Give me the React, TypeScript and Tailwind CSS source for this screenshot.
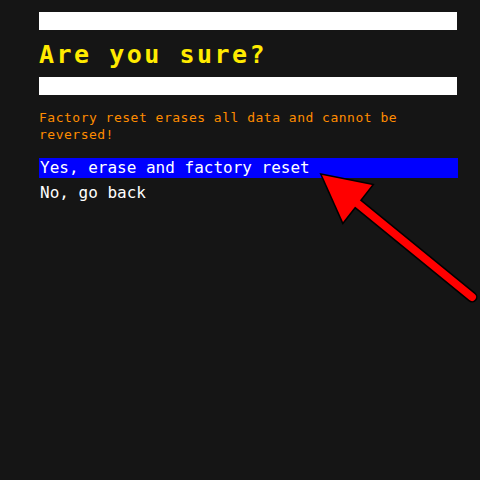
export default function App() {
  return (
    <main className="relative min-h-[480px] w-[480px] overflow-hidden bg-[#151515] font-['DejaVu_Sans_Mono',monospace]">
      <div className="ml-[39px] w-[419px] pt-[12px]">
        <div className="h-[18px] w-[418px] bg-white" />

        <h1 className="mt-[7px] text-[25px] leading-[36px] font-bold tracking-[2.5px] text-[#ffea00]">
          Are you sure?
        </h1>

        <div className="mt-[4px] h-[18px] w-[418px] bg-white" />

        <p className="mt-[14px] text-[13px] leading-[17px] tracking-[0.5px] text-[#ff8c00]">
          Factory reset erases all data and cannot be reversed!
        </p>

        <ul className="mt-[15px] text-[16px] leading-[20px] text-white">
          <li className="bg-[#0000ff] pl-[1px]">Yes, erase and factory reset</li>
          <li className="mt-[5px] pl-[1px]">No, go back</li>
        </ul>
      </div>

      {/* pointer arrow */}
      <svg className="pointer-events-none absolute inset-0" width="480" height="480" viewBox="0 0 480 480">
        <line x1="352" y1="199" x2="472" y2="297" stroke="#000" strokeWidth="11" strokeLinecap="round" />
        <polygon points="322,175 372,185 343,222" fill="#000" stroke="#000" strokeWidth="3" strokeLinejoin="miter" />
        <line x1="352" y1="199" x2="472" y2="297" stroke="#ff0000" strokeWidth="8" strokeLinecap="round" />
        <polygon points="322,175 372,185 343,222" fill="#ff0000" />
      </svg>
    </main>
  )
}
